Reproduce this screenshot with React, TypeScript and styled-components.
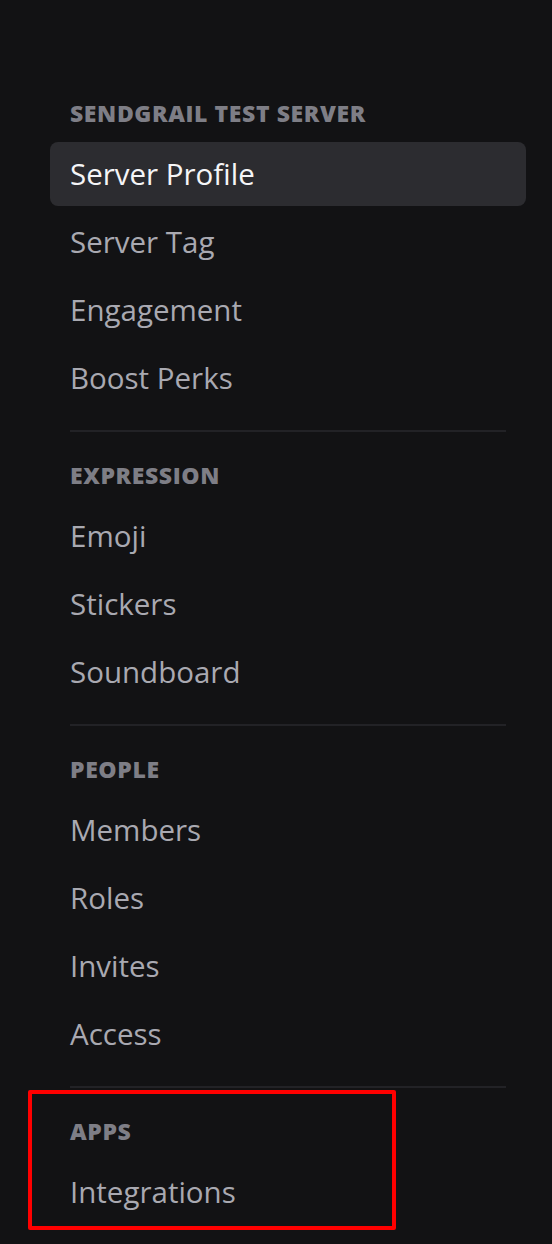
import React from "react";
import styled, {createGlobalStyle} from "styled-components";

const GlobalStyle = createGlobalStyle`
    html, body {
        margin: 0;
        background: #121214;
    }
    body {
        font-family: "Open Sans", "Noto Sans", "Liberation Sans", sans-serif;
    }
`;

const Sidebar = styled.nav`
    display: flex;
    flex-direction: column;
    padding: 99px 26px 40px 50px;
    min-height: 1244px;
    box-sizing: border-box;
    background: #121214;
`;

const Section = styled.section`
    position: relative;
    display: flex;
    flex-direction: column;
    gap: 4px;
`;

const Header = styled.h2`
    margin: 0 0 11px;
    padding-left: 20px;
    height: 28px;
    line-height: 28px;
    font-size: 23px;
    font-weight: 800;
    color: #7e7e86;
    letter-spacing: 0.6px;
    text-transform: uppercase;
`;

const Item = styled.div<{$selected?: boolean}>`
    height: 64px;
    display: flex;
    align-items: center;
    padding-left: 20px;
    padding-bottom: 2px;
    box-sizing: border-box;
    border-radius: 8px;
    font-size: 29.5px;
    font-weight: 500;
    color: ${({$selected}) => ($selected ? "#f5f5f7" : "#a9a9b1")};
    background: ${({$selected}) => ($selected ? "#2c2c30" : "transparent")};
`;

const Divider = styled.hr`
    margin: 20px 20px 29px;
    border: none;
    height: 2px;
    background: #222226;
`;

// Red annotation box drawn over the last section.
const Highlight = styled.div`
    position: absolute;
    left: -22px;
    top: -27px;
    width: 368px;
    height: 140px;
    box-sizing: border-box;
    border: 4px solid #ff0000;
    border-radius: 2px;
    pointer-events: none;
`;

interface ISection {
    title: string;
    items: string[];
    highlight?: boolean;
}

const sections: ISection[] = [
    {title: "Sendgrail Test Server", items: ["Server Profile", "Server Tag", "Engagement", "Boost Perks"]},
    {title: "Expression", items: ["Emoji", "Stickers", "Soundboard"]},
    {title: "People", items: ["Members", "Roles", "Invites", "Access"]},
    {title: "Apps", items: ["Integrations"], highlight: true},
];

export default function App() {
    return (
        <>
            <GlobalStyle />
            <Sidebar>
                {sections.map((section, i) => (
                    <React.Fragment key={section.title}>
                        {i > 0 && <Divider />}
                        <Section>
                            <Header>{section.title}</Header>
                            {section.items.map((item) => (
                                <Item key={item} $selected={item === "Server Profile"}>
                                    {item}
                                </Item>
                            ))}
                            {section.highlight && <Highlight />}
                        </Section>
                    </React.Fragment>
                ))}
            </Sidebar>
        </>
    );
}
